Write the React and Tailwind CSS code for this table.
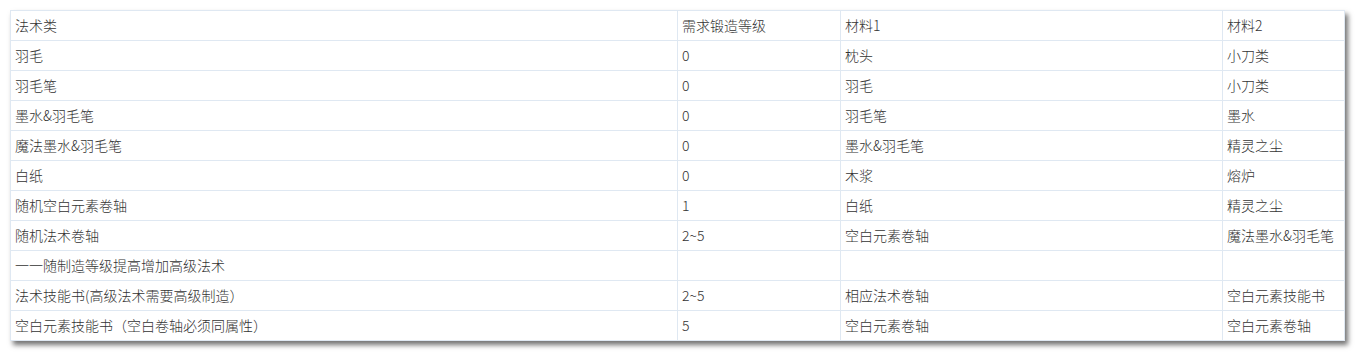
export default function App() {
  const rows = [
    ["法术类", "需求锻造等级", "材料1", "材料2"],
    ["羽毛", "0", "枕头", "小刀类"],
    ["羽毛笔", "0", "羽毛", "小刀类"],
    ["墨水&羽毛笔", "0", "羽毛笔", "墨水"],
    ["魔法墨水&羽毛笔", "0", "墨水&羽毛笔", "精灵之尘"],
    ["白纸", "0", "木浆", "熔炉"],
    ["随机空白元素卷轴", "1", "白纸", "精灵之尘"],
    ["随机法术卷轴", "2~5", "空白元素卷轴", "魔法墨水&羽毛笔"],
    ["一一随制造等级提高增加高级法术", "", "", ""],
    ["法术技能书(高级法术需要高级制造）", "2~5", "相应法术卷轴", "空白元素技能书"],
    ["空白元素技能书（空白卷轴必须同属性）", "5", "空白元素卷轴", "空白元素卷轴"],
  ];
  return (
    <div className="w-[1355px] h-[355px] bg-white pt-[10px] pl-[10px]">
      <table
        className="border-collapse bg-white table-fixed w-[1334px] text-[14px] font-light text-[#333] shadow-[3px_4px_5px_rgba(0,0,0,0.55)] border border-[#e3e8ee]"
        style={{ fontFamily: '"Microsoft YaHei", "Noto Sans CJK SC", "Noto Sans", sans-serif' }}
      >
        <colgroup>
          <col className="w-[667px]" />
          <col className="w-[163px]" />
          <col className="w-[382px]" />
          <col className="w-[122px]" />
        </colgroup>
        <tbody>
          {rows.map((r, i) => (
            <tr key={i} className="h-[30px]">
              {r.map((c, j) => (
                <td
                  key={j}
                  className="border border-[#dfe8f2] px-[4px] py-0 leading-[29px] whitespace-nowrap align-middle"
                >
                  {c}
                </td>
              ))}
            </tr>
          ))}
        </tbody>
      </table>
    </div>
  );
}
